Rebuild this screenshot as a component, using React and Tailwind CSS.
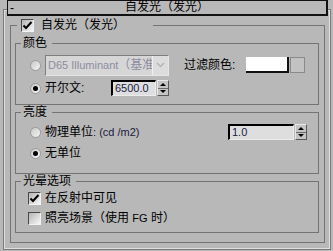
import React from "react";

const Check = ({ on }) => (
  <span className="w-[13px] h-[13px] shrink-0 border border-t-[#4a4a4a] border-l-[#4a4a4a] border-b-[#f2f2f2] border-r-[#f2f2f2] bg-linear-to-br from-[#b4b4b4] to-[#f8f8f8] flex items-center justify-center">
    {on && (
      <svg width="11" height="11" viewBox="0 0 11 11">
        <path d="M1.5 5.5 L4 8 L9.5 2" fill="none" stroke="#000" strokeWidth="2" />
      </svg>
    )}
  </span>
);

const Radio = ({ on }) => (
  <span className="w-[11px] h-[11px] shrink-0 rounded-full border border-[#9a9a9a] bg-linear-to-br from-[#c8c8c8] to-[#f6f6f6] flex items-center justify-center">
    {on && <span className="w-[5px] h-[5px] rounded-full bg-black" />}
  </span>
);

const Arrows = () => (
  <div className="w-[12px] h-[16px] flex flex-col bg-[#c4c4c4] border border-t-[#e8e8e8] border-l-[#e8e8e8] border-b-[#5a5a5a] border-r-[#5a5a5a]">
    <div className="flex-1 flex items-center justify-center border-b border-[#6a6a6a]">
      <svg width="6" height="3" viewBox="0 0 6 3">
        <path d="M0 3 L3 0 L6 3 Z" fill="#000" />
      </svg>
    </div>
    <div className="flex-1 flex items-center justify-center">
      <svg width="6" height="3" viewBox="0 0 6 3">
        <path d="M0 0 L3 3 L6 0 Z" fill="#000" />
      </svg>
    </div>
  </div>
);

const Spinner = ({ value, wide }) => (
  <div className="flex items-center gap-[1px]">
    <div
      className={`${wide ? "w-[66px]" : "w-[45px]"} h-[16px] border-t-2 border-l-2 border-b border-r border-t-black border-l-black border-b-[#ececec] border-r-[#ececec] bg-[#dedede] text-[11px] leading-[13px] pl-[2px] text-[#1a1a3e]`}
    >
      {value}
    </div>
    <Arrows />
  </div>
);

const Legend = ({ children }) => (
  <legend className="h-[14px] ml-[5px] pl-[2px] pr-[5px] text-[12px] leading-[14px] text-black">
    {children}
  </legend>
);

export default function App() {
  return (
    <div className="w-[333px] h-[251px] overflow-hidden bg-[#b8b8b8] pt-[9px] font-['Liberation_Sans','Noto_Sans_CJK_SC',sans-serif] text-[12px] text-black">
      <div className="ml-[3px] w-[328px] h-[241px] border border-[#7a7a7a] shadow-[inset_0_0_0_1px_#dedede]">
        {/* rollout title */}
        <div className="-mt-[10px] ml-[3px] w-[321px] h-[16px] flex items-center bg-[#b8b8b8] border-t border-l border-r-2 border-b-2 border-[#111]">
          <span className="w-[14px] pl-[2px] leading-[12px]">-</span>
          <span className="flex-1 text-center leading-[13px]">自发光（发光）</span>
          <span className="w-[14px]" />
        </div>

        <fieldset className="mt-[2px] ml-[6px] w-[315px] h-[225px] border border-[#747474]">
          <legend className="h-[14px] ml-[6px] pl-[4px] w-[136px]">
            <span className="flex items-center h-[14px] gap-[7px]">
              <Check on />
              <span className="leading-[14px]">自发光（发光）</span>
            </span>
          </legend>

          {/* 颜色 */}
          <fieldset className="mt-[4px] ml-[4px] w-[304px] h-[69px] border border-[#747474]">
            <Legend>颜色</Legend>
            <div className="pt-[4px] flex flex-col">
              <div className="h-[22px] flex items-center">
                <span className="ml-[14px]">
                  <Radio />
                </span>
                <div className="ml-[4px] w-[124px] h-[21px] flex border border-t-[#7e7e7e] border-l-[#7e7e7e] border-b-[#e6e6e6] border-r-[#e6e6e6] bg-[#d6d6d6]">
                  <span className="flex-1 min-w-0 whitespace-nowrap pl-[2px] text-[11px] leading-[19px] text-[#8c8ca0]">
                    D65 Illuminant<span className="text-[12px]">（基准</span>
                  </span>
                  <span className="w-[16px] shrink-0 flex items-center justify-center bg-[#dcdcdc] border-l border-[#f0f0f0]">
                    <svg width="9" height="6" viewBox="0 0 9 6">
                      <path d="M1 1 L4.5 4.5 L8 1" fill="none" stroke="#b4b4b4" strokeWidth="1.5" />
                    </svg>
                  </span>
                </div>
                <span className="ml-[15px] w-[62px] whitespace-nowrap">过滤颜色:</span>
                <span className="w-[43px] h-[16px] bg-white border-r-2 border-b-2 border-[#111]" />
                <span className="ml-[1px] w-[15px] h-[16px] bg-[#c2c2c2] border border-[#8a8a8a]" />
              </div>
              <div className="mt-[1px] h-[22px] flex items-center">
                <span className="ml-[14px]">
                  <Radio on />
                </span>
                <span className="ml-[4px] w-[66px]">开尔文:</span>
                <Spinner value="6500.0" />
              </div>
            </div>
          </fieldset>

          {/* 亮度 */}
          <fieldset className="ml-[4px] w-[304px] h-[69px] border border-[#747474]">
            <Legend>亮度</Legend>
            <div className="pt-[3px] flex flex-col">
              <div className="h-[20px] flex items-center">
                <span className="ml-[14px]">
                  <Radio />
                </span>
                <span className="ml-[4px] w-[183px] whitespace-nowrap">
                  物理单位<span className="text-[11px] text-[#1a1a3e]">: (cd /m2)</span>
                </span>
                <Spinner value="1.0" wide />
              </div>
              <div className="mt-[1px] h-[20px] flex items-center">
                <span className="ml-[14px]">
                  <Radio on />
                </span>
                <span className="ml-[4px]">无单位</span>
              </div>
            </div>
          </fieldset>

          {/* 光晕选项 */}
          <fieldset className="ml-[4px] w-[304px] h-[59px] border border-[#747474]">
            <Legend>光晕选项</Legend>
            <div className="flex flex-col">
              <div className="h-[20px] flex items-center">
                <span className="ml-[12px]">
                  <Check on />
                </span>
                <span className="ml-[4px]">在反射中可见</span>
              </div>
              <div className="h-[20px] flex items-center">
                <span className="ml-[12px]">
                  <Check />
                </span>
                <span className="ml-[4px] whitespace-nowrap">
                  照亮场景（使用 <span className="text-[11px]">FG</span> 时）
                </span>
              </div>
            </div>
          </fieldset>
        </fieldset>
      </div>
    </div>
  );
}
